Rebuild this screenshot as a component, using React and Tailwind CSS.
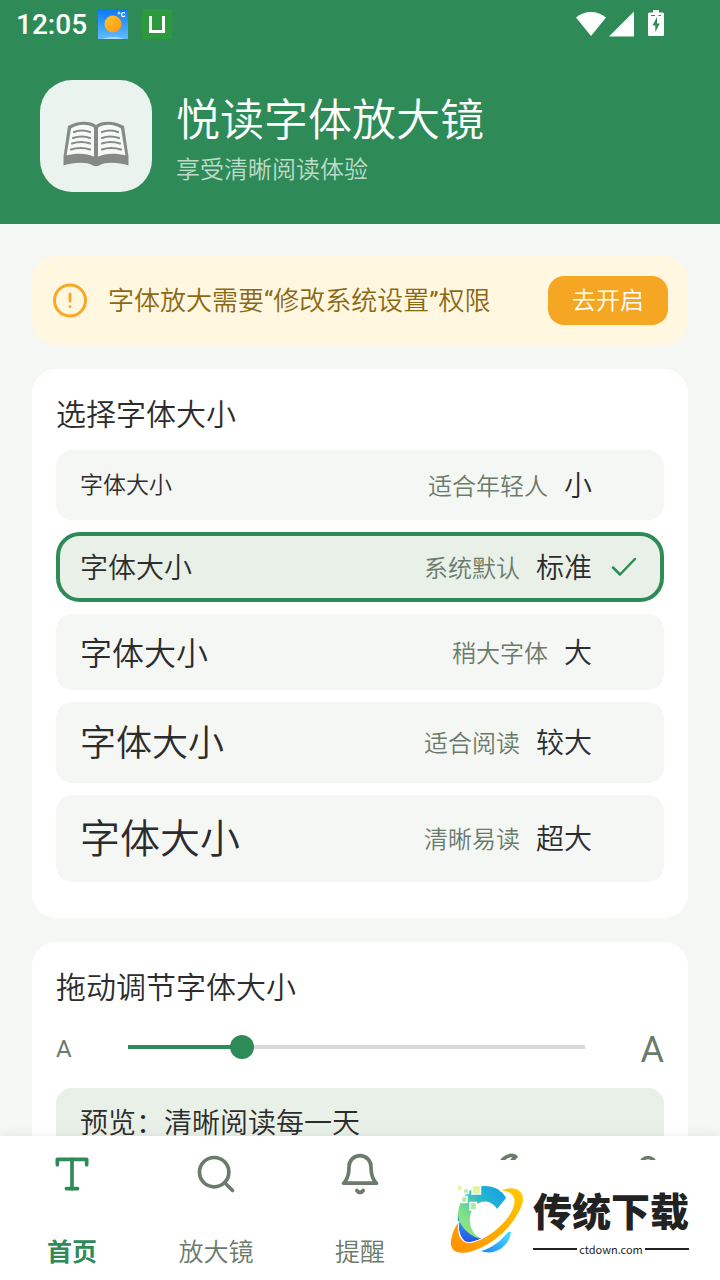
import { useState } from 'react';

const FONT = "font-['Roboto','Noto_Sans_CJK_SC',sans-serif]";

const sizes = [
  { id: 'small', hint: '适合年轻人', name: '小', text: 'text-[23px]', height: 'h-[70px]' },
  { id: 'normal', hint: '系统默认', name: '标准', text: 'text-[28px]', height: 'h-[70px]' },
  { id: 'large', hint: '稍大字体', name: '大', text: 'text-[32px]', height: 'h-[76px]' },
  { id: 'larger', hint: '适合阅读', name: '较大', text: 'text-[36px]', height: 'h-[81px]' },
  { id: 'huge', hint: '清晰易读', name: '超大', text: 'text-[40px]', height: 'h-[87px]' },
];

const tabs = [
  { id: 'home', label: '首页', paths: ['M4 7V4h16v3', 'M9 20h6', 'M12 4v16'] },
  { id: 'magnifier', label: '放大镜', paths: ['M19 11a8 8 0 1 1-16 0 8 8 0 0 1 16 0z', 'M21 21l-4.35-4.35'] },
  {
    id: 'remind',
    label: '提醒',
    paths: ['M18 8A6 6 0 0 0 6 8c0 7-3 9-3 9h18s-3-2-3-9', 'M13.73 21a2 2 0 0 1-3.46 0'],
  },
  {
    id: 'tools',
    paths: [
      'M14.7 6.3a1 1 0 0 0 0 1.4l1.6 1.6a1 1 0 0 0 1.4 0l3.77-3.77a6 6 0 0 1-7.94 7.94l-6.91 6.91a2.12 2.12 0 0 1-3-3l6.91-6.91a6 6 0 0 1 7.94-7.94l-3.76 3.76z',
    ],
  },
  {
    id: 'mine',
    paths: ['M20 21v-2a4 4 0 0 0-4-4H8a4 4 0 0 0-4 4v2', 'M16 7a4 4 0 1 1-8 0 4 4 0 0 1 8 0z'],
  },
];

function StatusBar() {
  return (
    <div className="flex h-12 items-center justify-between pl-4 pr-14">
      <div className="flex items-center">
        <span className="w-[82px] pt-0.5 text-[28px] font-medium leading-8">12:05</span>
        <svg width="30" height="30" viewBox="0 0 30 30">
          <defs>
            <linearGradient id="sky" x1="0" y1="0" x2="0" y2="1">
              <stop offset="0" stopColor="#0878f8" />
              <stop offset="1" stopColor="#62bcff" />
            </linearGradient>
            <linearGradient id="sun" x1="0" y1="0" x2="1" y2="1">
              <stop offset="0" stopColor="#ffc52e" />
              <stop offset="1" stopColor="#ff9612" />
            </linearGradient>
          </defs>
          <path d="M0 0h30v30H0z" fill="url(#sky)" />
          <ellipse cx="15" cy="31" rx="11" ry="3" fill="#a8dcff" />
          <circle cx="15" cy="15" r="8.5" fill="url(#sun)" />
          <circle cx="21" cy="4" r="1" fill="none" stroke="#fff" />
          <path d="M27 4.5c-1-1.5-3.5-1-3.5 1.2s2.5 2.5 3.5 1" fill="none" stroke="#fff" strokeWidth="1.3" />
        </svg>
        <svg className="ml-3.5" width="30" height="30" viewBox="0 0 30 30">
          <path d="M0 0h30v30H0z" fill="#2c9a3c" />
          <path d="M8.5 7v15.5h13V7" fill="none" stroke="#fff" strokeWidth="3" />
        </svg>
      </div>
      <div className="flex items-center">
        <svg width="30" height="26" viewBox="0 0 30 26" fill="#fff">
          <path d="M15 25 0 6.500c8-7.500 22-7.500 30 0z" />
        </svg>
        <svg className="ml-[3px]" width="25" height="26" viewBox="0 0 25 26" fill="#fff">
          <path d="M25 .5v25H0z" />
        </svg>
        <svg className="ml-3.5" width="16" height="28" viewBox="0 0 16 28">
          <path d="M5 0h6v2.5h3.5q1.5 0 1.5 1.5v20.5q0 1.5-1.5 1.5h-13Q0 26 0 24.5V4q0-1.5 1.5-1.5H5z" fill="#fff" />
          <path d="M3 5.5h4M10.5 5.5H13" stroke="#2e8b57" strokeWidth="1" />
          <path d="M9 7 4.5 15.5h2.8V22l4.5-8.500H9z" fill="#2e8b57" />
        </svg>
      </div>
    </div>
  );
}

function BookIcon() {
  return (
    <svg width="66" height="48" viewBox="0 0 66 48" fill="none">
      <path d="M5 6C14 1 26 0 33 5c7-5 19-4 28 1l4.5 31v8.5C55 42 42 42 37 45q-4 2.5-8 0C24 42 11 42 .5 45.5V37z" fill="#868a87" />
      <path d="M8 8.5C15 4 25 3.500 31.5 8v29C24 33 12 33 3.5 35.500z" fill="#f5f9f7" />
      <path d="M58 8.5C51 4 41 3.500 34.5 8v29C42 33 54 33 62.5 35.500z" fill="#f5f9f7" />
      <path d="M33 7v32" stroke="#868a87" strokeWidth="4" />
      <path
        d="M11 12q8-3 16 0M10 18q9-3 17 0M9 23.5q9-3 18 0M8 29.5q10-3 19 0M55 12q-8-3-16 0M56 18q-9-3-17 0M57 23.5q-9-3-18 0M58 29.5q-10-3-19 0"
        stroke="#868a87"
        strokeWidth="2.2"
        strokeLinecap="round"
      />
    </svg>
  );
}

function Header() {
  return (
    <header className="shrink-0 bg-[#2e8b57] text-white">
      <StatusBar />
      <div className="flex items-center gap-6 px-10 py-8">
        <div className="flex size-28 items-center justify-center rounded-[32px] bg-[#eaf3ee] pt-4">
          <BookIcon />
        </div>
        <div className="pt-2">
          <h1 className="text-[44px] leading-[56px]">悦读字体放大镜</h1>
          <p className="mt-1 text-2xl leading-[34px] text-white/70">享受清晰阅读体验</p>
        </div>
      </div>
    </header>
  );
}

function PermissionBanner() {
  return (
    <section className="flex items-center rounded-3xl bg-[#fff7e0] p-5">
      <svg width="36" height="36" viewBox="0 0 36 36" fill="none" stroke="#f9a825" strokeWidth="3" strokeLinecap="round">
        <circle cx="18" cy="17.5" r="15.5" />
        <path d="M18 11v7M18 23.5v.1" />
      </svg>
      <p className="ml-5 flex-1 text-[26px] leading-9 text-[#8b6914]">
        字体放大需要<span className="font-normal">“</span>修改系统设置<span className="font-normal">”</span>权限
      </p>
      <button type="button" className="rounded-2xl bg-[#f5a623] px-6 pt-0.5 text-2xl leading-[47px] text-white">
        去开启
      </button>
    </section>
  );
}

function SizeOption({ option, selected, onSelect }) {
  return (
    <button
      type="button"
      aria-pressed={selected}
      onClick={onSelect}
      className={`flex w-full items-center pt-[3px] text-left ${option.height} ${
        selected ? 'rounded-3xl border-4 border-[#2e8b57] bg-[#e8f0e8] px-5' : 'rounded-2xl bg-[#f5f7f5] px-6'
      }`}
    >
      <span className={`flex-1 ${option.text}`}>字体大小</span>
      <span className="text-2xl text-[#6b7b6b]">{option.hint}</span>
      <span className="ml-4 text-[28px]">{option.name}</span>
      <span className="ml-4 flex w-8 justify-center">
        {selected && (
          <svg width="32" height="32" viewBox="0 0 32 32" fill="none" stroke="#2e8b57" strokeWidth="2.5" strokeLinecap="round" strokeLinejoin="round">
            <path d="m5 14.5 7 7L27 6" />
          </svg>
        )}
      </span>
    </button>
  );
}

function TabBar({ active, onChange }) {
  return (
    <nav className="relative grid h-36 shrink-0 grid-cols-5 bg-white shadow-[0_-2px_10px_rgba(0,0,0,0.06)]">
      {tabs.map((tab) => (
        <button
          key={tab.id}
          type="button"
          aria-label={tab.label || tab.id}
          onClick={() => onChange(tab.id)}
          className={`flex flex-col items-center justify-between pb-[9px] pt-4 ${
            active === tab.id ? 'font-bold text-[#2e8b57]' : 'text-[#6b7b6b]'
          }`}
        >
          <svg width="44" height="44" viewBox="0 0 24 24" fill="none" stroke="currentColor" strokeWidth="2" strokeLinecap="round" strokeLinejoin="round">
            {tab.paths.map((d) => (
              <path key={d} d={d} />
            ))}
          </svg>
          {tab.label && <span className="text-[25px] leading-9">{tab.label}</span>}
        </button>
      ))}
    </nav>
  );
}

function SiteBadge() {
  return (
    <a href="#ctdown" className="absolute bottom-0 right-0 flex h-30 w-[288px] items-center bg-white pl-3.5 pr-[31px] text-[#222]">
      <svg width="80" height="84" viewBox="0 2 80 84" fill="none">
        <defs>
          <linearGradient id="ring" x1="1" y1="0" x2="0" y2="1">
            <stop offset="0" stopColor="#ffcb00" />
            <stop offset="1" stopColor="#ff8f00" />
          </linearGradient>
          <linearGradient id="arc" x1="1" y1="0" x2="0" y2="1">
            <stop offset="0" stopColor="#149be8" />
            <stop offset="0.35" stopColor="#22b5d0" />
            <stop offset="0.7" stopColor="#7fe08a" />
            <stop offset="1" stopColor="#9bea72" />
          </linearGradient>
          <linearGradient id="tail" x1="0" y1="1" x2="1" y2="0">
            <stop offset="0" stopColor="#1d86f2" />
            <stop offset="1" stopColor="#4ae0ff" />
          </linearGradient>
          <linearGradient id="base" x1="0" y1="0" x2="0" y2="1">
            <stop offset="0" stopColor="#2aa5f5" />
            <stop offset="1" stopColor="#2451e8" />
          </linearGradient>
        </defs>
        <path d="M12 37c-1 12 1 26 10 30l14-4C24 58 17 50 12 37z" fill="url(#base)" />
        <path d="M31 11c12-3 24 1 29 11l-9 11c-5-9-16-10-22-3-8 9-7 24 5 33C20 58 12 48 12 37c1-9 5-17 11-22z" fill="url(#arc)" />
        <path d="M35 75c11-3 20-10 27-19h3c-2 15-17 24-30 19z" fill="url(#tail)" />
        <path
          d="M54 15c14-8 28 0 22 15-8 20-28 39-51 46C10 80 2 74 5 62c1-6 4-12 8-17-2 14 2 24 14 21 19-5 41-26 41-41 0-7-6-10-14-10z"
          fill="url(#ring)"
          stroke="#fff"
          strokeWidth="1"
        />
        <path d="M12 10h3.5v4H12z" fill="#e2f59a" />
        <g stroke="#fff" strokeWidth="1.5">
          <path d="M26 9.500h8.500V18H26z" fill="#e2f59a" />
          <path d="M17.500 12.500h5v5h-5zM15.500 20.500h5.500v6h-5.500zM24 26.500h6.500V34H24z" fill="#b0eaa0" />
        </g>
      </svg>
      <div className="ml-[7px] flex-1">
        <div className="text-center font-['Noto_Sans_CJK_SC',sans-serif] text-[39px] font-black leading-[52px]">传统下载</div>
        <div className="mt-1.5 flex items-center gap-0.5 font-['Noto_Sans_CJK_SC',sans-serif] text-[11px] font-normal leading-4">
          <span className="h-0.5 flex-1 bg-[#222]" />
          ctdown.com
          <span className="h-0.5 flex-1 bg-[#222]" />
        </div>
      </div>
    </a>
  );
}

export default function App() {
  const [level, setLevel] = useState(1);
  const [tab, setTab] = useState('home');
  const percent = (level / (sizes.length - 1)) * 100;

  return (
    <div lang="zh-CN" className={`relative flex h-screen flex-col overflow-hidden bg-[#f5f7f5] font-[350] text-[#2c2c2c] ${FONT}`}>
      <Header />

      <main className="flex min-h-0 flex-1 flex-col gap-6 overflow-hidden px-8 pt-8 *:shrink-0">
        <PermissionBanner />

        {/* Preset sizes */}
        <section className="rounded-3xl bg-white px-6 pb-9 pt-6">
          <h2 className="text-3xl leading-[44px]">选择字体大小</h2>
          <div className="mt-[13px] flex flex-col gap-3">
            {sizes.map((option, index) => (
              <SizeOption key={option.id} option={option} selected={index === level} onSelect={() => setLevel(index)} />
            ))}
          </div>
        </section>

        {/* Slider */}
        <section className="rounded-3xl bg-white p-6">
          <h2 className="text-3xl leading-[44px]">拖动调节字体大小</h2>
          <div className="mt-2 flex h-[58px] items-center font-normal text-[#6b7b6b]">
            <span className="w-15 pt-1 text-2xl">A</span>
            <input
              type="range"
              aria-label="字体大小"
              min="0"
              max={sizes.length - 1}
              value={level}
              onChange={(e) => setLevel(Number(e.target.value))}
              style={{ backgroundImage: `linear-gradient(to right, #2e8b57 ${percent}%, #d9d9d9 ${percent}%)` }}
              className="h-6 min-w-0 flex-1 appearance-none bg-[length:calc(100%-24px)_4px] bg-center bg-no-repeat [&::-webkit-slider-thumb]:size-6 [&::-webkit-slider-thumb]:appearance-none [&::-webkit-slider-thumb]:rounded-full [&::-webkit-slider-thumb]:bg-[#2e8b57]"
            />
            <span className="w-[67px] pt-1.5 text-right text-4xl">A</span>
          </div>
          <div className="mt-3 rounded-2xl bg-[#e8f0e8] px-6 py-4 text-[28px] leading-10">预览：清晰阅读每一天</div>
        </section>
      </main>

      <TabBar active={tab} onChange={setTab} />
      <SiteBadge />
    </div>
  );
}
